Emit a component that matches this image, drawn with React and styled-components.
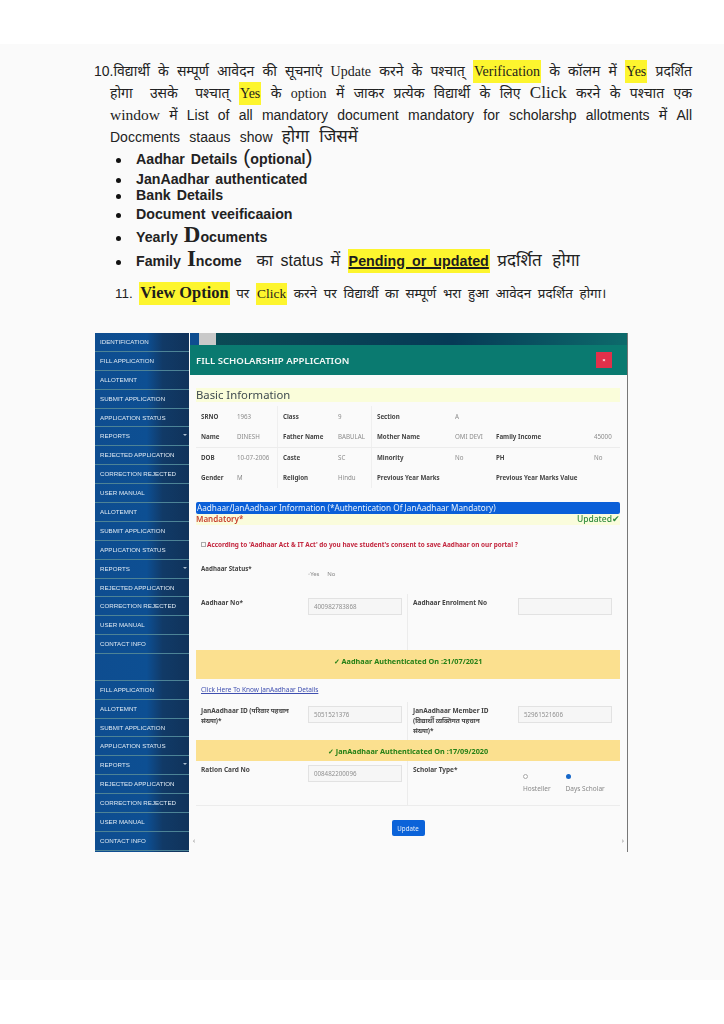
import styled, { createGlobalStyle } from "styled-components";

const menuItems = [
  "IDENTIFICATION", "FILL APPLICATION", "ALLOTEMNT", "SUBMIT APPLICATION", "APPLICATION STATUS",
  "REPORTS", "REJECTED APPLICATION", "CORRECTION REJECTED", "USER MANUAL", "ALLOTEMNT",
  "SUBMIT APPLICATION", "APPLICATION STATUS", "REPORTS", "REJECTED APPLICATION", "CORRECTION REJECTED",
  "USER MANUAL", "CONTACT INFO", "", "FILL APPLICATION", "ALLOTEMNT", "SUBMIT APPLICATION",
  "APPLICATION STATUS", "REPORTS", "REJECTED APPLICATION", "CORRECTION REJECTED", "USER MANUAL", "CONTACT INFO",
];

const basicRows = [
  [["SRNO", "1963"], ["Class", "9"], ["Section", "A"], ["", ""]],
  [["Name", "DINESH"], ["Father Name", "BABULAL"], ["Mother Name", "OMI DEVI"], ["Family Income", "45000"]],
  [["DOB", "10-07-2006"], ["Caste", "SC"], ["Minority", "No"], ["PH", "No"]],
  [["Gender", "M"], ["Religion", "Hindu"], ["Previous Year Marks", ""], ["Previous Year Marks Value", ""]],
];

const App = () => {
  return (
    <Page>
      <GlobalStyle />
      <Sheet>
        <Notes>
          <FirstLine>
            10.विद्यार्थी के सम्पूर्ण आवेदन की सूचनाएं <Serif>Update</Serif> करने के पश्चात् <Mark><Serif>Verification</Serif></Mark> के कॉलम में <Mark><Serif>Yes</Serif></Mark> प्रदर्शित
          </FirstLine>
          <Line>
            <Spread>होगा उसके पश्चात्</Spread> <Mark><Serif>Yes</Serif></Mark> के <Serif>option</Serif> में जाकर प्रत्येक विद्यार्थी के लिए <BigSerif>Click</BigSerif> करने के पश्चात एक
          </Line>
          <Line>
            <WindowWord>window</WindowWord> में List of all mandatory document mandatory for scholarshp allotments में All
          </Line>
          <LastLine>
            Doccments staaus show <Large>होगा जिसमें</Large>
          </LastLine>
          <Bullets>
            <Bullet $height={23}>Aadhar Details <Paren>(</Paren>optional<Paren>)</Paren></Bullet>
            <Bullet $height={16}>JanAadhar authenticated</Bullet>
            <Bullet $height={17}>Bank Details</Bullet>
            <Bullet $height={21}>Document veeificaaion</Bullet>
            <Bullet $height={24}>Yearly <Capital>D</Capital>ocuments</Bullet>
            <Bullet $height={23}>
              Family <Capital>I</Capital>ncome
              <Plain>
                का status में <PendingMark><Underlined>Pending or updated</Underlined></PendingMark> <Tail>प्रदर्शित होगा</Tail>
              </Plain>
            </Bullet>
          </Bullets>
          <Closing>
            11. <Mark><ViewOption>View Option</ViewOption></Mark> पर <Mark><Serif>Click</Serif></Mark> करने पर विद्यार्थी का सम्पूर्ण भरा हुआ आवेदन प्रदर्शित होगा।
          </Closing>
        </Notes>

        <Shot>
          <Sidebar>
            {menuItems.map((item, i) => (
              <MenuItem key={i} $tall={item === ""}>
                {item}
                {item === "REPORTS" && <Caret />}
              </MenuItem>
            ))}
          </Sidebar>

          <Main>
            <TopStrip />
            <ModalHeader>
              FILL SCHOLARSHIP APPLICATION
              <CloseButton>×</CloseButton>
            </ModalHeader>
            <ModalBody>
              <SectionTitle>Basic Information</SectionTitle>
              <BasicTable>
                {basicRows.map((row, r) => (
                  <BasicRow key={r} $ruled={r === 2}>
                    {row.map(([label, value], c) => (
                      <BasicCell key={c} $col={c}>
                        <CellLabel $col={c}>{label}</CellLabel>
                        {!label.startsWith("Previous") && <CellValue>{value}</CellValue>}
                      </BasicCell>
                    ))}
                  </BasicRow>
                ))}
              </BasicTable>

              <BlueBar>Aadhaar/JanAadhaar Information (*Authentication Of JanAadhaar Mandatory)</BlueBar>
              <StatusBar>
                <span>Mandatory*</span>
                <Updated>Updated✔</Updated>
              </StatusBar>

              <Consent>
                <ConsentBox />
                According to 'Aadhaar Act &amp; IT Act' do you have student's consent to save Aadhaar on our portal ?
              </Consent>

              <StatusRow>
                <StatusLabel>Aadhaar Status*</StatusLabel>
                <YesNo>◦Yes &nbsp;&nbsp;&nbsp; No</YesNo>
              </StatusRow>

              <FormRow $height={56}>
                <FieldLabel>Aadhaar No*</FieldLabel>
                <Input>400982783868</Input>
                <FieldLabel $divided>Aadhaar Enrolment No</FieldLabel>
                <Input />
              </FormRow>

              <Banner $height={29}>✓ Aadhaar Authenticated On :21/07/2021</Banner>
              <DetailsLink>Click Here To Know JanAadhaar Details</DetailsLink>

              <FormRow $height={38}>
                <FieldLabel>JanAadhaar ID (परिवार पहचान संख्या)*</FieldLabel>
                <Input>5051521376</Input>
                <FieldLabel $divided>JanAadhaar Member ID (विद्यार्थी व्यक्तिगत पहचान संख्या)*</FieldLabel>
                <Input>52961521606</Input>
              </FormRow>

              <Banner $height={21}>✓ JanAadhaar Authenticated On :17/09/2020</Banner>

              <FormRow $height={45} $ruled>
                <FieldLabel>Ration Card No</FieldLabel>
                <Input>008482200096</Input>
                <FieldLabel $divided>Scholar Type*</FieldLabel>
                <RadioGroup>
                  <RadioOption><Radio />Hosteller</RadioOption>
                  <RadioOption><Radio $checked />Days Scholar</RadioOption>
                </RadioGroup>
              </FormRow>

              <ButtonRow>
                <UpdateButton>Update</UpdateButton>
              </ButtonRow>
              <ScrollHints>
                <span>‹</span>
                <span>›</span>
              </ScrollHints>
            </ModalBody>
          </Main>
        </Shot>
      </Sheet>
      <Footer />
    </Page>
  );
};

const GlobalStyle = createGlobalStyle`
  html, body {
    margin: 0;
    padding: 0;
    background: #fff;
  }
`;

const Page = styled.div`
  width: 724px;
  height: 1024px;
  padding-top: 44px;
  box-sizing: border-box;
  overflow: hidden;
  background: #fff;
  font-family: "Liberation Sans", "Noto Sans", sans-serif;
`;

const Sheet = styled.div`
  height: 936px;
  padding: 16px 32px 0 94px;
  box-sizing: border-box;
  background: #fafafa;
  color: #222;
`;

const Footer = styled.div`
  height: 44px;
`;

const Notes = styled.div`
  height: 273px;
  font-size: 14px;
`;

const Line = styled.div`
  height: 22px;
  line-height: 22px;
  margin-left: 16px;
  white-space: nowrap;
  text-align: justify;
  text-align-last: justify;
`;

const FirstLine = styled(Line)`
  margin-left: 0;
`;

const LastLine = styled(Line)`
  width: 248px;
`;

const Serif = styled.span`
  font-family: "Liberation Serif", serif;
`;

const BigSerif = styled(Serif)`
  font-size: 17px;
`;

const WindowWord = styled(Serif)`
  font-size: 15.5px;
`;

const Spread = styled.span`
  word-spacing: 8px;
`;

const Large = styled.span`
  font-size: 17px;
`;

const Mark = styled.span`
  display: inline-block;
  padding: 0 1px;
  background: #fdf52e;
  color: #1d1d1d;
`;

const PendingMark = styled(Mark)`
  line-height: 24px;
`;

const Bullets = styled.ul`
  margin: 0;
  padding: 0 0 0 22px;
  list-style: none;
`;

const Bullet = styled.li`
  height: ${(p) => p.$height}px;
  line-height: ${(p) => p.$height}px;
  font-weight: 700;
  font-size: 14.2px;
  word-spacing: 2px;
  white-space: nowrap;

  &::before {
    content: "";
    display: inline-block;
    vertical-align: middle;
    width: 5px;
    height: 5px;
    margin-right: 15px;
    border-radius: 50%;
    background: #111;
  }
`;

const Paren = styled.span`
  font-size: 21px;
  font-weight: 400;
  line-height: 0;
`;

const Capital = styled.span`
  font-family: "Liberation Serif", serif;
  font-size: 23px;
  line-height: 0;
`;

const Plain = styled.span`
  margin-left: 15px;
  font-weight: 400;
  font-size: 16px;
  line-height: 0;
  word-spacing: 3px;
`;

const Tail = styled.span`
  font-size: 17px;
  word-spacing: 6px;
`;

const Underlined = styled.span`
  font-size: 14.3px;
  font-weight: 700;
  text-decoration: underline;
  text-decoration-thickness: 2px;
`;

const Closing = styled.div`
  margin: 10px 0 0 21px;
  font-size: 13.4px;
  line-height: 22px;
  white-space: nowrap;
  word-spacing: 3px;
`;

const ViewOption = styled.span`
  font-family: "Liberation Serif", serif;
  font-size: 16.4px;
  font-weight: 700;
  word-spacing: 0;
`;

const Shot = styled.div`
  display: flex;
  width: 532px;
  height: 519px;
  margin-left: 1px;
  background: #fafafa;
  border-right: 1px solid #777;
  filter: blur(0.35px);
`;

const Sidebar = styled.nav`
  flex: none;
  width: 94px;
  margin-right: 1px;
  background: linear-gradient(90deg, #0e4d90 0%, #0d4f93 55%, #113a67 72%, #10335b 100%);
`;

const MenuItem = styled.div`
  position: relative;
  height: ${(p) => (p.$tall ? 26.6 : 18.9)}px;
  line-height: 18px;
  padding-left: 5px;
  box-sizing: border-box;
  border-bottom: 1px solid #4d8396;
  color: #dfe9f2;
  font-size: 6.2px;
  white-space: nowrap;
`;

const Caret = styled.i`
  position: absolute;
  top: 7px;
  right: 2px;
  border: 2px solid transparent;
  border-top-color: #a9bdd0;
`;

const Main = styled.div`
  flex: 1;
  min-width: 0;
`;

const TopStrip = styled.div`
  height: 12px;
  background: linear-gradient(90deg, #0e4d90 0 2%, #c9c9c9 2% 6%, #0b4a55 6%, #063a56 60%, #0d6a6b 100%);
`;

const ModalHeader = styled.div`
  display: flex;
  align-items: center;
  justify-content: space-between;
  height: 30px;
  padding: 0 15px 0 6px;
  background: #0a7a70;
  color: #f3f7f5;
  font-family: "Noto Sans", sans-serif;
  font-size: 9.6px;
  font-weight: 600;
`;

const CloseButton = styled.div`
  width: 16px;
  height: 16px;
  background: #e2304a;
  color: #fff;
  font-size: 6px;
  line-height: 16px;
  text-align: center;
`;

const ModalBody = styled.div`
  position: relative;
  height: 477px;
  padding: 13px 7px 0 6px;
  box-sizing: border-box;
  background: #fafafa;
  color: #333;
  font-family: "Noto Sans", sans-serif;
`;

const SectionTitle = styled.div`
  height: 14px;
  background: #fafdda;
  color: #3f4a50;
  font-size: 11.3px;
  line-height: 14px;
`;

const BasicTable = styled.div`
  margin-top: 4px;
  height: 96px;
`;

const BasicRow = styled.div`
  display: grid;
  grid-template-columns: 82px 94px 119px 128px;
  height: 20.4px;
  border-top: ${(p) => (p.$ruled ? "1px solid #ececec" : "none")};
  box-sizing: border-box;
`;

const BasicCell = styled.div`
  display: flex;
  align-items: center;
  padding-left: 5px;
  font-size: 6.2px;
  white-space: nowrap;
  border-right: ${(p) => (p.$col < 2 ? "1px solid #efefef" : "none")};
`;

const CellLabel = styled.span`
  flex: none;
  width: ${(p) => (p.$col === 3 ? 98 : p.$col === 2 ? 78 : p.$col === 1 ? 55 : 36)}px;
  font-weight: 700;
  color: #444;
`;

const CellValue = styled.span`
  color: #8b8b8b;
`;

const BlueBar = styled.div`
  height: 12px;
  padding-left: 1px;
  border-radius: 2px;
  background: #0a5fd8;
  color: #e8f1fb;
  font-size: 8.2px;
  line-height: 12px;
  white-space: nowrap;
`;

const StatusBar = styled.div`
  display: flex;
  justify-content: space-between;
  height: 11px;
  background: #fafcdc;
  color: #c8402f;
  font-size: 8px;
  font-weight: 600;
  line-height: 10px;
`;

const Updated = styled.span`
  color: #2e8b3c;
  font-size: 8.5px;
  font-weight: 500;
`;

const Consent = styled.div`
  display: flex;
  align-items: center;
  gap: 1px;
  margin: 14px 0 0 5px;
  height: 10px;
  color: #c3273f;
  font-size: 6.4px;
  font-weight: 700;
  white-space: nowrap;
`;

const ConsentBox = styled.i`
  width: 3px;
  height: 3px;
  border: 1px solid #aaa;
`;

const StatusRow = styled.div`
  display: flex;
  height: 45px;
  padding: 15px 0 0 5px;
  box-sizing: border-box;
`;

const StatusLabel = styled.div`
  width: 107px;
  color: #444;
  font-size: 6.2px;
  font-weight: 700;
  line-height: 9px;
`;

const YesNo = styled.div`
  margin-top: 6px;
  color: #888;
  font-size: 6px;
  white-space: nowrap;
`;

const FormRow = styled.div`
  display: grid;
  grid-template-columns: 107px 94px 116px 94px;
  height: ${(p) => p.$height}px;
  padding-left: 5px;
  box-sizing: border-box;
  border-bottom: ${(p) => (p.$ruled ? "1px solid #ececec" : "none")};
`;

const FieldLabel = styled.div`
  padding: 4px ${(p) => (p.$divided ? "20px" : "8px")} 0 ${(p) => (p.$divided ? "5px" : "0")};
  margin-left: ${(p) => (p.$divided ? "5px" : "0")};
  border-left: ${(p) => (p.$divided ? "1px solid #ececec" : "none")};
  color: #444;
  font-size: 6.5px;
  font-weight: 700;
  line-height: 10px;
`;

const Input = styled.div`
  align-self: start;
  height: 15px;
  margin-top: 4px;
  padding-left: 5px;
  border: 1px solid #e2e2e2;
  background: #f6f6f6;
  color: #8f8f8f;
  font-size: 6.2px;
  line-height: 15px;
`;

const Banner = styled.div`
  height: ${(p) => p.$height}px;
  padding-top: 6px;
  box-sizing: border-box;
  background: #fbe08f;
  color: #268017;
  font-size: 7.3px;
  font-weight: 700;
  text-align: center;
`;

const DetailsLink = styled.a`
  display: block;
  height: 23px;
  padding: 6px 0 0 5px;
  box-sizing: border-box;
  color: #3f4fb0;
  font-size: 6.5px;
  text-decoration: underline;
`;

const RadioGroup = styled.div`
  display: flex;
  gap: 15px;
  padding: 13px 0 0 5px;
`;

const RadioOption = styled.div`
  display: flex;
  flex-direction: column;
  gap: 5px;
  color: #888;
  font-size: 6.5px;
  white-space: nowrap;
`;

const Radio = styled.i`
  width: 5px;
  height: 5px;
  border-radius: 50%;
  border: ${(p) => (p.$checked ? "none" : "1px solid #aaa")};
  box-sizing: border-box;
  background: ${(p) => (p.$checked ? "#1667c9" : "#fff")};
`;

const ButtonRow = styled.div`
  display: flex;
  justify-content: center;
  margin-top: 14px;
`;

const UpdateButton = styled.button`
  width: 33px;
  height: 16px;
  padding: 0;
  border: none;
  border-radius: 2px;
  background: #0b63d9;
  color: #e5effb;
  font-family: "Noto Sans", sans-serif;
  font-size: 6.2px;
`;

const ScrollHints = styled.div`
  position: absolute;
  right: 3px;
  bottom: 7px;
  left: 3px;
  display: flex;
  justify-content: space-between;
  color: #888;
  font-size: 7px;
`;

export default App;
